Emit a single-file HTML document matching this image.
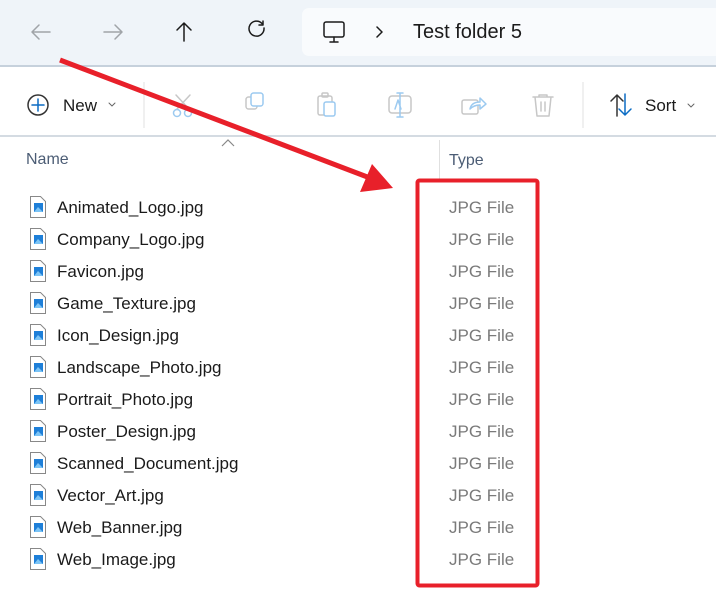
<!DOCTYPE html>
<html><head><style>
*{margin:0;padding:0;box-sizing:border-box}
body{width:716px;height:598px;background:#fff;font-family:"Liberation Sans",sans-serif;position:relative;overflow:hidden}
.top{position:absolute;left:0;top:0;width:716px;height:67px;background:#eff4f9;border-bottom:2px solid #c6d1dc}
.addr{position:absolute;left:302px;top:8px;width:420px;height:48px;background:#f9fbfd;border-radius:7px}
.tb{position:absolute;left:0;top:69px;width:716px;height:68px;border-bottom:2px solid #d4dbe2}
.t{position:absolute;font-size:17px;color:#1b1b1b;white-space:nowrap}
.row{position:absolute;left:0;height:32px;width:716px}
.row .n{position:absolute;left:57px;top:0;font-size:17px;color:#1a1a1a}
.row .ty{position:absolute;left:449px;top:0;font-size:17px;color:#7a7a7a}
.row svg{position:absolute;left:29px;top:-3px}
</style></head><body>
<div class="top"></div>
<div class="addr"></div>
<svg style="position:absolute;left:0;top:0" width="716" height="140">
<g fill="none" stroke-linecap="round" stroke-linejoin="round" stroke-width="1.5">
<path d="M50 32H32M39 25l-7 7 7 7" stroke="#a0a4a8"/>
<path d="M104 32h18M115 25l7 7-7 7" stroke="#a0a4a8"/>
<path d="M184 41V23M177 30l7-7 7 7" stroke="#1b1b1b"/>
<path d="M264 28a7.5 7.5 0 1 1-2-4.5M263 21v4h-4" stroke="#1b1b1b"/>
<rect x="324" y="22" width="20" height="15" rx="2" stroke="#1b1b1b"/>
<path d="M330 42h8M334 37v5" stroke="#1b1b1b"/>
<path d="M377 27l5 5-5 5" stroke="#1b1b1b"/>
<circle cx="38" cy="105" r="10" stroke="#333"/>
<path d="M38 99v12M32 105h12" stroke="#0b6cc4"/>
<path d="M109 103l3 3 3-3" stroke="#666" stroke-width="1"/>
<path d="M176 95l13 14M190 95l-13 14" stroke="#c7c7c7"/>
<circle cx="177" cy="113" r="3.5" stroke="#9ccaf0"/><circle cx="188" cy="113" r="3.5" stroke="#9ccaf0"/>
<rect x="246" y="97" width="11" height="12" rx="2.5" stroke="#c7c7c7"/>
<rect x="251" y="93" width="12" height="13" rx="2.5" stroke="#9ccaf0" fill="#fff"/>
<rect x="318" y="96" width="14" height="19" rx="2" stroke="#c7c7c7"/>
<rect x="322" y="93" width="6" height="4" rx="1" stroke="#c7c7c7"/>
<rect x="324" y="102" width="11" height="14" rx="2" stroke="#9ccaf0" fill="#fff"/>
<rect x="389" y="96" width="22" height="17" rx="3" stroke="#c7c7c7"/>
<path d="M400 93v24M397 93h6M397 117h6M395 109l3-9 3 9" stroke="#9ccaf0"/>
<rect x="462" y="100" width="16" height="14" rx="2" stroke="#c7c7c7"/>
<path d="M470 109c1-5 5-7 10-7v-4l6 6-6 5v-4c-4 0-7 1-10 4z" stroke="#9ccaf0" fill="#fff"/>
<path d="M533 97h20M539 97v-2h8v2M535 97l2 19h12l2-19M541 102v9M545 102v9" stroke="#c7c7c7"/>
<path d="M617 116V95M611 101l6-6 6 6" stroke="#333"/>
<path d="M625 94v21M619 109l6 6 6-6" stroke="#0b6cc4"/>
<path d="M688 104l3 3 3-3" stroke="#666" stroke-width="1"/>
</g>
<line x1="144" y1="82" x2="144" y2="128" stroke="#e2e2e2"/>
<line x1="583" y1="82" x2="583" y2="128" stroke="#e2e2e2"/>
</svg>
<div class="tb"></div>
<div class="t" style="left:413px;top:21px;font-size:20px">Test folder 5</div>
<div class="t" style="left:63px;top:96px">New</div>
<div class="t" style="left:645px;top:96px">Sort</div>
<svg style="position:absolute;left:220px;top:138px" width="16" height="10"><path d="M2 8l6-6 6 6" fill="none" stroke="#888" stroke-width="1.2"/></svg>
<div style="position:absolute;left:439px;top:140px;width:1px;height:40px;background:#e0e0e0"></div>
<div class="t" style="left:26px;top:151px;color:#4c5d75;font-size:16px">Name</div>
<div class="t" style="left:449px;top:152px;color:#4c5d75;font-size:16px">Type</div>
<div id="rows"></div>
<script></script>
<div class="row" style="top:198px"><svg width="18" height="24"><path d="M1.5 1.5h10l5 5v16h-15z" fill="#fff" stroke="#888"/><rect x="5" y="8" width="9" height="9" fill="#1e7fd8"/><path d="M5 17l4-5 5 5z" fill="#7cc4f5"/></svg><span class="n">Animated_Logo.jpg</span><span class="ty">JPG File</span></div>
<div class="row" style="top:230px"><svg width="18" height="24"><path d="M1.5 1.5h10l5 5v16h-15z" fill="#fff" stroke="#888"/><rect x="5" y="8" width="9" height="9" fill="#1e7fd8"/><path d="M5 17l4-5 5 5z" fill="#7cc4f5"/></svg><span class="n">Company_Logo.jpg</span><span class="ty">JPG File</span></div>
<div class="row" style="top:262px"><svg width="18" height="24"><path d="M1.5 1.5h10l5 5v16h-15z" fill="#fff" stroke="#888"/><rect x="5" y="8" width="9" height="9" fill="#1e7fd8"/><path d="M5 17l4-5 5 5z" fill="#7cc4f5"/></svg><span class="n">Favicon.jpg</span><span class="ty">JPG File</span></div>
<div class="row" style="top:294px"><svg width="18" height="24"><path d="M1.5 1.5h10l5 5v16h-15z" fill="#fff" stroke="#888"/><rect x="5" y="8" width="9" height="9" fill="#1e7fd8"/><path d="M5 17l4-5 5 5z" fill="#7cc4f5"/></svg><span class="n">Game_Texture.jpg</span><span class="ty">JPG File</span></div>
<div class="row" style="top:326px"><svg width="18" height="24"><path d="M1.5 1.5h10l5 5v16h-15z" fill="#fff" stroke="#888"/><rect x="5" y="8" width="9" height="9" fill="#1e7fd8"/><path d="M5 17l4-5 5 5z" fill="#7cc4f5"/></svg><span class="n">Icon_Design.jpg</span><span class="ty">JPG File</span></div>
<div class="row" style="top:358px"><svg width="18" height="24"><path d="M1.5 1.5h10l5 5v16h-15z" fill="#fff" stroke="#888"/><rect x="5" y="8" width="9" height="9" fill="#1e7fd8"/><path d="M5 17l4-5 5 5z" fill="#7cc4f5"/></svg><span class="n">Landscape_Photo.jpg</span><span class="ty">JPG File</span></div>
<div class="row" style="top:390px"><svg width="18" height="24"><path d="M1.5 1.5h10l5 5v16h-15z" fill="#fff" stroke="#888"/><rect x="5" y="8" width="9" height="9" fill="#1e7fd8"/><path d="M5 17l4-5 5 5z" fill="#7cc4f5"/></svg><span class="n">Portrait_Photo.jpg</span><span class="ty">JPG File</span></div>
<div class="row" style="top:422px"><svg width="18" height="24"><path d="M1.5 1.5h10l5 5v16h-15z" fill="#fff" stroke="#888"/><rect x="5" y="8" width="9" height="9" fill="#1e7fd8"/><path d="M5 17l4-5 5 5z" fill="#7cc4f5"/></svg><span class="n">Poster_Design.jpg</span><span class="ty">JPG File</span></div>
<div class="row" style="top:454px"><svg width="18" height="24"><path d="M1.5 1.5h10l5 5v16h-15z" fill="#fff" stroke="#888"/><rect x="5" y="8" width="9" height="9" fill="#1e7fd8"/><path d="M5 17l4-5 5 5z" fill="#7cc4f5"/></svg><span class="n">Scanned_Document.jpg</span><span class="ty">JPG File</span></div>
<div class="row" style="top:486px"><svg width="18" height="24"><path d="M1.5 1.5h10l5 5v16h-15z" fill="#fff" stroke="#888"/><rect x="5" y="8" width="9" height="9" fill="#1e7fd8"/><path d="M5 17l4-5 5 5z" fill="#7cc4f5"/></svg><span class="n">Vector_Art.jpg</span><span class="ty">JPG File</span></div>
<div class="row" style="top:518px"><svg width="18" height="24"><path d="M1.5 1.5h10l5 5v16h-15z" fill="#fff" stroke="#888"/><rect x="5" y="8" width="9" height="9" fill="#1e7fd8"/><path d="M5 17l4-5 5 5z" fill="#7cc4f5"/></svg><span class="n">Web_Banner.jpg</span><span class="ty">JPG File</span></div>
<div class="row" style="top:550px"><svg width="18" height="24"><path d="M1.5 1.5h10l5 5v16h-15z" fill="#fff" stroke="#888"/><rect x="5" y="8" width="9" height="9" fill="#1e7fd8"/><path d="M5 17l4-5 5 5z" fill="#7cc4f5"/></svg><span class="n">Web_Image.jpg</span><span class="ty">JPG File</span></div>
<svg style="position:absolute;left:0;top:0" width="716" height="598">
<rect x="417.5" y="180.5" width="120" height="405" rx="2" fill="none" stroke="#e8202a" stroke-width="4"/>
<line x1="60" y1="60" x2="370" y2="178" stroke="#e8202a" stroke-width="5"/>
<path d="M393 188L360 192L372 164Z" fill="#e8202a"/>
</svg>
</body></html>
